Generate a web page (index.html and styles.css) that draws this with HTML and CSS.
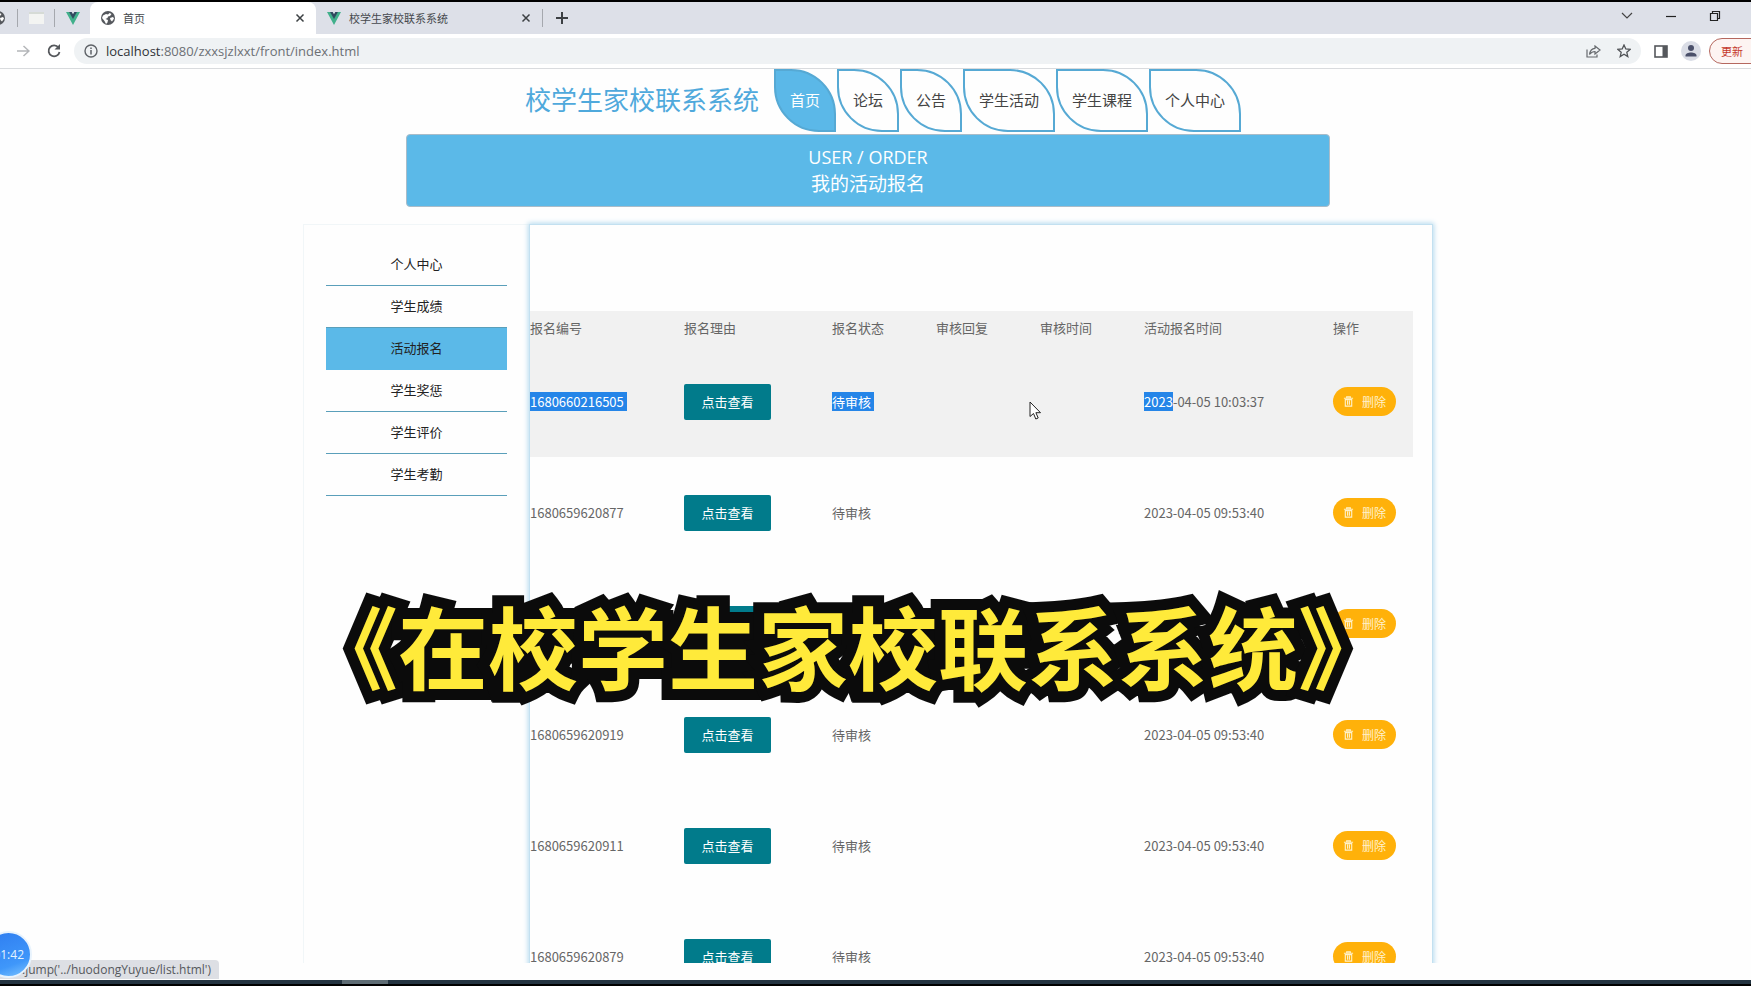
FILE: index.html
```html
<!DOCTYPE html>
<html lang="zh-CN">
<head>
<meta charset="utf-8">
<title>首页</title>
<link rel="stylesheet" href="styles.css">
</head>
<body>
<svg class="defs" aria-hidden="true">
  <symbol id="globe" viewBox="0 0 14 14"><circle cx="7" cy="7" r="7" fill="#55585d"/><path d="M2 4.500 5 3l2 .5 1.500-1.500 2 1-1.500 2-2 .5-.5 1.500L4.500 8 7 9l-.5 2.500L5 13 3.500 10 1 7z" fill="#fff"/><path d="M9 7l3-1 1 1.500-2 3L9.500 9z" fill="#fff"/></symbol>
  <symbol id="vue" viewBox="0 0 14 13"><path d="M0 0h3.500L7 6l3.500-6H14L7 13z" fill="#41b08b"/><path d="M3 0h2.700L7 2.200 8.300 0H11L7 7z" fill="#2f495e"/></symbol>
  <symbol id="close" viewBox="0 0 10 10"><path d="M1.500 1.500l7 7M8.500 1.500l-7 7" stroke="#3c4043" stroke-width="1.500"/></symbol>
  <symbol id="trash" viewBox="0 0 12 12"><path d="M1 2.500h10M4 2.500v-1.500h4v1.500M2.500 4v7h7V4zM5 5v4.500M7 5v4.500" fill="none" stroke="#fff2cc" stroke-width="1.200"/></symbol>
</svg>

<div class="tabstrip">
  <div class="pinned pinned-cut"><svg width="14" height="14"><use href="#globe"/></svg></div>
  <div class="pinned pinned-page"><svg width="15" height="12" viewBox="0 0 15 12"><rect width="15" height="12" fill="#f3f4f2"/><path d="M0 1h15" stroke="#d6dbd6" stroke-width="2"/></svg></div>
  <div class="pinned pinned-vue"><svg width="14" height="13"><use href="#vue"/></svg></div>
  <div class="tab tab-active">
    <svg width="14" height="14"><use href="#globe"/></svg><span>首页</span>
    <button aria-label="关闭"><svg width="10" height="10"><use href="#close"/></svg></button>
  </div>
  <div class="tab">
    <svg width="14" height="13"><use href="#vue"/></svg><span>校学生家校联系系统</span>
    <button aria-label="关闭"><svg width="10" height="10"><use href="#close"/></svg></button>
  </div>
  <button class="newtab" aria-label="新标签页"><svg width="12" height="12" viewBox="0 0 12 12"><path d="M6 0v12M0 6h12" stroke="#3c4043" stroke-width="2"/></svg></button>
  <div class="winctl">
    <button aria-label="搜索标签页"><svg width="12" height="12" viewBox="0 0 12 12"><path d="M1 3l5 5 5-5" fill="none" stroke="#444" stroke-width="1.200"/></svg></button>
    <button aria-label="最小化"><svg width="12" height="12" viewBox="0 0 12 12"><path d="M1 6.500h10" stroke="#222" stroke-width="1.200"/></svg></button>
    <button aria-label="还原"><svg width="12" height="12" viewBox="0 0 12 12"><path d="M1.500 3.500h7v7h-7zM3.500 3.500v-2h7v7h-2" fill="none" stroke="#222" stroke-width="1.200"/></svg></button>
  </div>
</div>

<div class="toolbar">
  <button aria-label="前进"><svg width="13" height="12" viewBox="0 0 13 12"><path d="M0 6h12M6.500 1l5.500 5-5.500 5" fill="none" stroke="#b4b6b9" stroke-width="1.500"/></svg></button>
  <button aria-label="重新加载"><svg width="14" height="14" viewBox="0 0 14 14"><path d="M11.500 3.500A5.500 5.500 0 1 0 12.500 8" fill="none" stroke="#55585c" stroke-width="1.800"/><path d="M13 0v5.500H7.500z" fill="#55585c"/></svg></button>
  <div class="omnibox">
    <svg width="14" height="14" viewBox="0 0 14 14"><circle cx="7" cy="7" r="6" fill="none" stroke="#5f6368" stroke-width="1.400"/><path d="M7 6v4.500M7 3.500v1.500" stroke="#5f6368" stroke-width="1.500"/></svg>
    <div class="url"><b>localhost</b>:8080/zxxsjzlxxt/front/index.html</div>
    <button aria-label="分享"><svg width="15" height="13" viewBox="0 0 15 13"><path d="M1 4.500v7.500h10V9.500M9 1l5 4-5 4V6.500C6.500 6.500 5 7.500 3.500 9.500 4 6 6 3.500 9 3.300z" fill="none" stroke="#66696d" stroke-width="1.200"/></svg></button>
    <button aria-label="收藏"><svg width="14" height="14" viewBox="0 0 14 14"><path d="M7 1l1.800 4 4.300.4-3.300 2.900 1 4.300L7 10.300l-3.800 2.300 1-4.300L.9 5.400 5.200 5z" fill="none" stroke="#505357" stroke-width="1.300"/></svg></button>
  </div>
  <button aria-label="侧边栏"><svg width="14" height="13" viewBox="0 0 14 13"><rect x="1" y="1" width="12" height="11" fill="none" stroke="#55585c" stroke-width="1.600"/><path d="M8.500 1H13v11H8.500z" fill="#55585c"/></svg></button>
  <button class="account" aria-label="用户"><svg width="20" height="20" viewBox="0 0 20 20"><circle cx="10" cy="10" r="10" fill="#dadde6"/><circle cx="10" cy="7" r="3" fill="#4a506a"/><path d="M4.500 14.500c0-4 11-4 11 0v1h-11z" fill="#4a506a"/></svg></button>
  <button class="update">更新</button>
</div>

<div class="viewport">
  <header class="site-head">
    <h1>校学生家校联系系统</h1>
    <nav>
      <a class="on" href="#">首页</a><a href="#">论坛</a><a href="#">公告</a><a href="#">学生活动</a><a href="#">学生课程</a><a href="#">个人中心</a>
    </nav>
  </header>
  <div class="banner"><p>USER / ORDER</p><p>我的活动报名</p></div>
  <div class="main">
    <aside>
      <a href="#">个人中心</a><a href="#">学生成绩</a><a class="on" href="#">活动报名</a><a href="#">学生奖惩</a><a href="#">学生评价</a><a href="#">学生考勤</a>
    </aside>
    <section class="panel">
      <table>
        <colgroup><col class="c-id"><col class="c-why"><col class="c-s"><col class="c-s"><col class="c-s"><col class="c-time"><col class="c-op"></colgroup>
        <thead><tr><th>报名编号</th><th>报名理由</th><th>报名状态</th><th>审核回复</th><th>审核时间</th><th>活动报名时间</th><th>操作</th></tr></thead>
        <tbody>
          <tr class="hover"><td><mark>1680660216505</mark></td><td><button class="view">点击查看</button></td><td><mark>待审核</mark></td><td></td><td></td><td><mark class="part">2023</mark>-04-05 10:03:37</td><td><button class="del"><svg width="11" height="11"><use href="#trash"/></svg>删除</button></td></tr>
          <tr><td>1680659620877</td><td><button class="view">点击查看</button></td><td>待审核</td><td></td><td></td><td>2023-04-05 09:53:40</td><td><button class="del"><svg width="11" height="11"><use href="#trash"/></svg>删除</button></td></tr>
          <tr><td></td><td><button class="view" aria-label="点击查看"></button></td><td></td><td></td><td></td><td></td><td><button class="del"><svg width="11" height="11"><use href="#trash"/></svg>删除</button></td></tr>
          <tr><td>1680659620919</td><td><button class="view">点击查看</button></td><td>待审核</td><td></td><td></td><td>2023-04-05 09:53:40</td><td><button class="del"><svg width="11" height="11"><use href="#trash"/></svg>删除</button></td></tr>
          <tr><td>1680659620911</td><td><button class="view">点击查看</button></td><td>待审核</td><td></td><td></td><td>2023-04-05 09:53:40</td><td><button class="del"><svg width="11" height="11"><use href="#trash"/></svg>删除</button></td></tr>
          <tr><td>1680659620879</td><td><button class="view">点击查看</button></td><td>待审核</td><td></td><td></td><td>2023-04-05 09:53:40</td><td><button class="del"><svg width="11" height="11"><use href="#trash"/></svg>删除</button></td></tr>
        </tbody>
      </table>
    </section>
  </div>
</div>
<div class="taskbar"><span></span></div>

<div class="status">javascript:jump('../huodongYuyue/list.html')</div>
<div class="timer">01:42</div>
<svg class="cursor" width="13" height="19" viewBox="0 0 13 19"><path d="M1 1v14.500l3.500-3 2.300 5.500 2.400-1-2.300-5.300h4.600z" fill="#fff" stroke="#222"/></svg>
<div class="caption">《在校学生家校联系系统》</div>
</body>
</html>
```
FILE: styles.css
```css
* { box-sizing: border-box; }
body {
  margin: 0;
  height: 100vh;
  display: flex;
  flex-direction: column;
  position: relative;
  overflow: hidden;
  background: #fefefe;
  color: #666;
  font: 13px/20px "Noto Sans CJK SC", sans-serif;
}
.defs { position: absolute; width: 0; height: 0; }
button { margin: 0; padding: 0; border: 0; background: none; font: inherit; color: inherit; display: flex; align-items: center; justify-content: center; }
a { text-decoration: none; color: inherit; }
p, h1 { margin: 0; font-weight: 400; }

/* browser frame */
.tabstrip { flex: none; height: 34px; border-top: 2px solid #000; background: #dde0e8; display: flex; align-items: stretch; color: #45484d; font-size: 11px; }
.pinned { display: flex; align-items: center; justify-content: center; }
.pinned svg { flex: none; }
.pinned-cut { width: 17px; justify-content: flex-start; }
.pinned-cut svg { margin-left: -9px; }
.pinned-page { width: 38px; background: linear-gradient(#a5a8ae, #a5a8ae) left center / 1px 18px no-repeat, linear-gradient(#a5a8ae, #a5a8ae) right center / 1px 18px no-repeat; }
.pinned-vue { width: 35px; }
.tab { width: 226px; padding: 0 11px 0 11px; display: flex; align-items: center; gap: 8px; }
.tab button { margin-left: auto; }
.tab-active { background: #fff; border-radius: 8px 8px 0 0; }
.newtab { width: 40px; background: linear-gradient(#a5a8ae, #a5a8ae) left center / 1px 18px no-repeat; }
.winctl { margin-left: auto; display: flex; gap: 32px; padding-right: 30px; padding-bottom: 4px; }
.toolbar { flex: none; height: 35px; background: #fff; border-bottom: 1px solid #d9dbde; display: flex; align-items: center; gap: 17px; padding-left: 17px; }
.omnibox { flex: 1; height: 26px; border-radius: 13px; background: #eff2f4; display: flex; align-items: center; gap: 16px; padding: 0 10px; margin: 0 -4px 0 -4px; }
.url { flex: 1; margin-left: -8px; color: #6c7075; font: 13px/20px "Open Sans", sans-serif; }
.url b { font-weight: 400; color: #303337; }
.toolbar > button { flex: none; }
.toolbar .account { margin: 0 -9px 0 -4px; }
.toolbar .update { width: 60px; height: 26px; margin-right: -18px; border: 1px solid #b5685f; border-radius: 13px; background: #fdf4f2; color: #c5392d; font-size: 11px; padding-right: 14px; }

/* page */
.viewport { flex: 1; min-height: 0; margin-bottom: 17px; padding-right: 15px; overflow: hidden; }
.site-head { display: flex; justify-content: center; align-items: center; gap: 15px; padding-left: 30px; height: 63px; }
.site-head h1 { font-size: 26px; line-height: 38px; padding-bottom: 3px; color: #4fa9dc; }
.site-head nav { display: flex; gap: 1px; }
.site-head nav a { height: 63px; padding: 0 14px; border: 2px solid #56a9d4; border-radius: 0 45px; font-size: 15px; line-height: 57px; color: #444; }
.site-head nav .on { background: #5bb8e8; color: #fff; }
.banner { width: 924px; max-width: 90%; margin: 2px auto 17px; padding: 10px 0; border: 1px solid #a9bcc9; border-radius: 4px; background: #5bb9e8; color: #fff; text-align: center; font-size: 19px; line-height: 26px; }
.banner p:first-child { font: 18px/25px "Open Sans", sans-serif; }
.main { width: 1130px; margin: 0 auto; display: flex; }
aside { flex: none; width: 226px; padding: 19px 22px 0 22px; border: 1px solid #f1f6f8; border-right: 0; color: #222; text-align: center; }
aside a { display: block; height: 42px; line-height: 39px; border-bottom: 1px solid #5a9fba; }
aside .on { background: #5bb9e8; border-color: #5bb9e8; }
.panel { flex: 1; padding: 86px 19px 0 0; border: 1px solid #c3e0f0; box-shadow: 0 0 5px 1px #b5daef; overflow: hidden; }
table { width: 100%; table-layout: fixed; border-collapse: collapse; }
.c-id { width: 154px; }
.c-why { width: 148px; }
.c-s { width: 104px; }
.c-time { width: 189px; }
th, td { padding: 0; text-align: left; font-weight: 400; white-space: nowrap; }
th { padding-bottom: 2px; }
thead tr { height: 35px; background: #f1f1f1; }
tbody tr { height: 111px; }
.hover { background: #f1f1f1; }
mark { display: inline-block; padding-right: 3px; background: #2585e8; color: #fff; line-height: 19px; }
mark.part { padding-right: 0; }
.view { width: 87px; height: 36px; border-radius: 2px; background: #017b8b; color: #fff; }
.del { width: 63px; height: 29px; border-radius: 15px; background: #ffb10a; color: #fff2cc; font-size: 12px; gap: 8px; }
.taskbar { flex: none; height: 6px; padding-left: 342px; border-bottom: 2px solid #000; background: #233340; }
.taskbar span { display: block; width: 46px; height: 4px; background: #5e6c74; }

/* overlays */
.status { position: absolute; left: 0; bottom: 7px; width: 219px; height: 19px; padding-right: 8px; display: flex; justify-content: flex-end; overflow: hidden; border-radius: 0 4px 0 0; background: #dddfe4; color: #55585c; font: 12px/20px "Open Sans", sans-serif; white-space: nowrap; }
.timer { position: absolute; left: -15px; bottom: 8px; width: 47px; height: 47px; padding-right: 6px; border: 2px solid #e8f3fd; border-radius: 50%; background: linear-gradient(160deg, #2e7df0, #3f97fa 70%, #7cc4ff); color: #e4f4ff; font: 12px/43px "Open Sans", sans-serif; text-align: right; white-space: nowrap; }
.cursor { position: absolute; left: 1029px; top: 401px; }
.caption { position: absolute; left: 308px; top: 579px; font-size: 90px; line-height: 130px; font-weight: 700; color: #ffea3a; -webkit-text-stroke: 22px #0b0b0b; paint-order: stroke fill; white-space: nowrap; }
```
